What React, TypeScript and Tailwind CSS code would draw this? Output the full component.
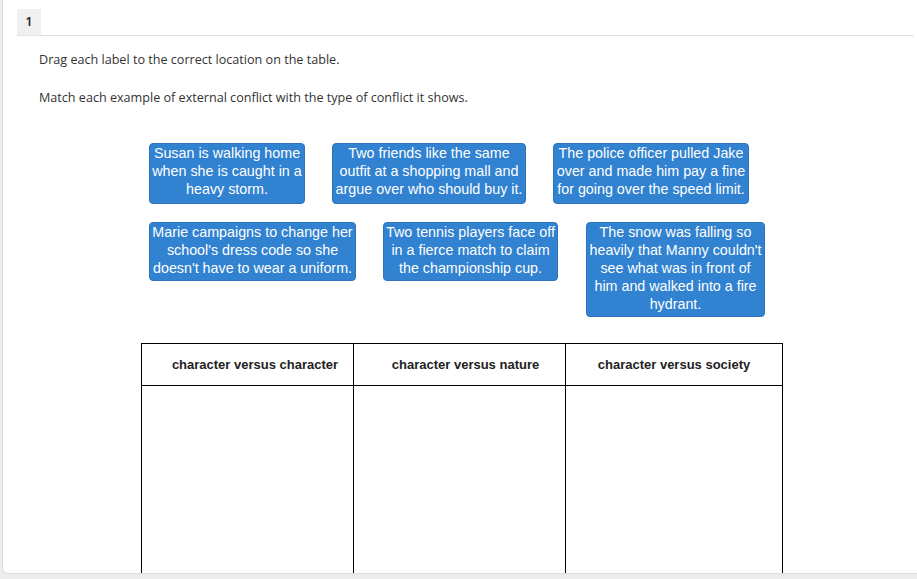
import React from "react";

const labelBase =
  "bg-[#3182d0] text-white text-center rounded-[4px] border border-[#2c74bb] pt-0 text-[14.3px] leading-[18px] whitespace-nowrap flex flex-col items-center [font-family:'Liberation_Sans',Arial,sans-serif]";

function Label({ w, lines }: { w: string; lines: string[] }) {
  return (
    <div className={`${labelBase} ${w}`}>
      {lines.map((l, i) => (
        <span key={i}>{l}</span>
      ))}
    </div>
  );
}

export default function App() {
  return (
    <div className="w-[917px] h-[579px] overflow-hidden bg-[#ececec]">
      <div className="ml-[2px] w-[930px] h-[574px] bg-white border-l border-b border-[#dedede] rounded-bl-[6px] overflow-hidden [font-family:'Open_Sans',sans-serif] text-[#333]">
        <div className="pt-[9px] ml-[14px] mr-[18px] border-b border-[#e2e2e2] flex">
          <div className="w-[24px] h-[26px] bg-[#f0f0f0] flex items-center justify-center text-[13px] font-semibold text-[#222]">
            1
          </div>
        </div>
        <div className="pl-[36px] pt-[15px] text-[12.6px] leading-[18px]">
          <p>Drag each label to the correct location on the table.</p>
          <p className="mt-[20px]">Match each example of external conflict with the type of conflict it shows.</p>
        </div>
        <div className="ml-[146px] mt-[36px] flex flex-col gap-[18px]">
          <div className="flex items-start gap-[27px]">
            <Label
              w="w-[156px] pb-[5px]"
              lines={["Susan is walking home", "when she is caught in a", "heavy storm."]}
            />
            <Label
              w="w-[194px] pb-[5px]"
              lines={["Two friends like the same", "outfit at a shopping mall and", "argue over who should buy it."]}
            />
            <Label
              w="w-[196px] pb-[5px]"
              lines={["The police officer pulled Jake", "over and made him pay a fine", "for going over the speed limit."]}
            />
          </div>
          <div className="flex items-start gap-[27px]">
            <Label
              w="w-[207px] pb-[3px]"
              lines={["Marie campaigns to change her", "school's dress code so she", "doesn't have to wear a uniform."]}
            />
            <Label
              w="w-[175px] pb-[3px]"
              lines={["Two tennis players face off", "in a fierce match to claim", "the championship cup."]}
            />
            <Label
              w="w-[179px] ml-[1px] pb-[3px]"
              lines={[
                "The snow was falling so",
                "heavily that Manny couldn't",
                "see what was in front of",
                "him and walked into a fire",
                "hydrant.",
              ]}
            />
          </div>
        </div>
        <div className="ml-[138px] mt-[26px] w-[642px] border border-black [font-family:'Liberation_Sans',Arial,sans-serif]">
          <div className="grid grid-cols-[212px_212px_216px] h-[42px] border-b border-black">
            <div className="flex items-center justify-center pl-[15px] font-bold text-[13px] text-[#222] border-r border-black">
              character versus character
            </div>
            <div className="flex items-center justify-center pl-[12px] font-bold text-[13px] text-[#222] border-r border-black">
              character versus nature
            </div>
            <div className="flex items-center justify-center font-bold text-[13px] text-[#222]">
              character versus society
            </div>
          </div>
          <div className="grid grid-cols-[212px_212px_216px] h-[220px]">
            <div className="border-r border-black" />
            <div className="border-r border-black" />
            <div />
          </div>
        </div>
      </div>
    </div>
  );
}
